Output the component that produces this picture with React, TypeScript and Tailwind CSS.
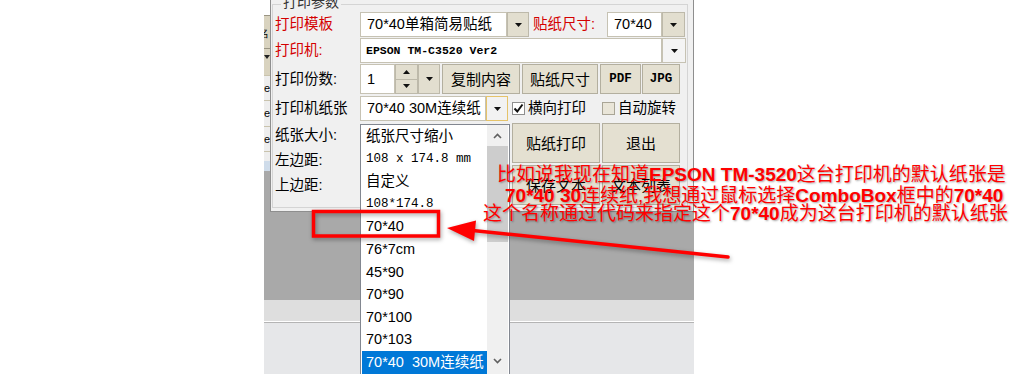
import React from "react";

function Tri({ up = false }: { up?: boolean }) {
  return (
    <svg width="7" height="4" viewBox="0 0 7 4">
      {up ? <path d="M0 4h7L3.5 0z" fill="#111" /> : <path d="M0 0h7L3.5 4z" fill="#111" />}
    </svg>
  );
}

function DropBtn({ className }: { className: string }) {
  return (
    <div className={"h-full flex items-center justify-center bg-[#e2decf] border border-[#bdb9aa] " + className}>
      <Tri />
    </div>
  );
}

function LeftStrip() {
  return (
    <div className="w-[6px] h-[212px] flex flex-col overflow-hidden text-[11px] leading-none">
      <div className="h-[15px] bg-white" />
      <div className="h-[33px] bg-[#d9d3bf] border-t border-[#9a9583] flex items-center overflow-hidden">
        <span className="-ml-[6px]">名</span>
      </div>
      <div className="h-[27px] bg-[#d9d3bf] border-t border-[#9a9583] flex items-start pt-[6px]">
        <svg width="6" height="4" viewBox="0 0 6 4"><path d="M0 0h6L3 4z" fill="#222" /></svg>
      </div>
      <div className="h-[25px] bg-[#eeeeee] border-t border-[#c9c3ad] flex items-center"><span className="font-['Liberation_Sans']">e</span></div>
      <div className="h-[26px] bg-[#eeeeee] border-t border-[#c9c3ad] flex items-center"><span className="font-['Liberation_Sans']">e</span></div>
      <div className="h-[25px] bg-[#eeeeee] border-t border-[#c9c3ad] flex items-center"><span className="font-['Liberation_Sans']">e</span></div>
      <div className="h-[10px] bg-[#eeeeee] border-t border-[#c9c3ad]" />
      <div className="h-[10px] bg-[#cfdcea]" />
      <div className="flex-1 bg-[#a9a9a9]" />
    </div>
  );
}

function Btn({ className, children }: { className: string; children: React.ReactNode }) {
  return (
    <div className={"h-full flex items-center justify-center bg-[#e4e0d1] border border-[#b3af9f] " + className}>
      {children}
    </div>
  );
}

function Dialog() {
  return (
    <div className="w-[424px] h-[212px] bg-[#f0f0f0] border-l border-r border-b border-[#8e8e8e] pl-px pr-[5px] pt-[4px] pb-[3px] text-[14.5px] leading-none font-['Liberation_Sans','Noto_Sans_CJK_SC',sans-serif]">
      <div className="relative h-[204px] border border-[#d4d4d4] pt-[7px] pl-[2px]">
        <div className="absolute left-[8px] -top-[10px] px-[2px] bg-[#f0f0f0] text-[#333] text-[14px] leading-[14px]">打印参数</div>

        {/* row 1 */}
        <div className="flex items-center h-[25px]">
          <div className="w-[85px] text-[#d40000]">打印模板</div>
          <div className="h-full w-[147px] bg-white border border-[#c6c2b3] flex items-center pl-[6px]">70*40单箱简易贴纸</div>
          <DropBtn className="w-[22px]" />
          <div className="ml-[4px] w-[74px] text-[#d40000]">贴纸尺寸:</div>
          <div className="h-full w-[55px] bg-white border border-[#c6c2b3] flex items-center pl-[6px]">70*40</div>
          <DropBtn className="w-[23px]" />
        </div>

        {/* row 2 */}
        <div className="flex items-center h-[25px] mt-px">
          <div className="w-[85px] text-[#d40000]">打印机:</div>
          <div className="h-full w-[302px] bg-white border border-[#c6c2b3] flex items-center pl-[5px] font-['Liberation_Mono',monospace] text-[11.5px] font-bold">EPSON TM-C3520 Ver2</div>
          <div className="h-full w-[24px] flex items-center justify-center bg-[#f4f4f4] border border-[#c6c2b3]"><Tri /></div>
        </div>

        {/* row 3 */}
        <div className="flex items-center h-[30px] mt-px">
          <div className="w-[85px]">打印份数:</div>
          <div className="h-full w-[35px] bg-white border border-[#c6c2b3] flex items-center pl-[6px]">1</div>
          <div className="h-full w-[23px] flex flex-col bg-[#e2decf] border border-[#bdb9aa]">
            <div className="flex-1 flex items-center justify-center border-b border-[#bdb9aa]"><Tri up /></div>
            <div className="flex-1 flex items-center justify-center"><Tri /></div>
          </div>
          <DropBtn className="w-[22px]" />
          <Btn className="ml-[2px] w-[78px] text-[15px]">复制内容</Btn>
          <Btn className="ml-[2px] w-[76px] text-[15px]">贴纸尺寸</Btn>
          <Btn className="ml-[2px] w-[41px] font-['Liberation_Mono',monospace] font-bold text-[12.5px]">PDF</Btn>
          <Btn className="ml-px w-[38px] font-['Liberation_Mono',monospace] font-bold text-[12.5px]">JPG</Btn>
        </div>

        {/* row 4 */}
        <div className="flex items-center h-[25px] mt-[2px]">
          <div className="w-[85px]">打印机纸张</div>
          <div className="h-full w-[126px] bg-white border border-[#c6c2b3] flex items-center pl-[6px] whitespace-nowrap">70*40 30M连续纸</div>
          <div className="h-full w-[22px] flex items-center justify-center bg-[#f2f2f2] border border-[#e5c36a]"><Tri /></div>
          <div className="ml-[4px] w-[13px] h-[13px] bg-white border border-[#8f8f8f] flex items-center justify-center">
            <svg width="11" height="11" viewBox="0 0 11 11"><path d="M1.5 5.5l2.8 3 5.2-7" stroke="#111" strokeWidth="2" fill="none" /></svg>
          </div>
          <div className="ml-[3px] w-[63px]">横向打印</div>
          <div className="ml-[11px] w-[13px] h-[13px] bg-[#e9e5d8] border border-[#a9a596]" />
          <div className="ml-[3px]">自动旋转</div>
        </div>

        {/* lower */}
        <div className="flex mt-[2px]">
          <div className="w-[85px] flex flex-col">
            <div className="h-[25px] flex items-center">纸张大小:</div>
            <div className="h-[25px] flex items-center">左边距:</div>
            <div className="h-[25px] flex items-center">上边距:</div>
          </div>
          <div className="w-[152px]" />
          <div className="grid grid-cols-[88px_78px] grid-rows-[40px_40px] gap-[2px] text-[15px]">
            <Btn className="">贴纸打印</Btn>
            <Btn className="">退出</Btn>
            <Btn className="">保存文本</Btn>
            <Btn className="">文本列表</Btn>
          </div>
        </div>
      </div>
    </div>
  );
}

const items: { t: string; mono?: boolean }[] = [
  { t: "纸张尺寸缩小" },
  { t: "108 x 174.8 mm", mono: true },
  { t: "自定义" },
  { t: "108*174.8", mono: true },
  { t: "70*40" },
  { t: "76*7cm" },
  { t: "45*90" },
  { t: "70*90" },
  { t: "70*100" },
  { t: "70*103" },
];

function DropList() {
  return (
    <div className="absolute left-[360px] top-[124px] w-[150px] h-[260px] bg-white border border-[#828790] flex text-[14.5px] leading-none font-['Liberation_Sans','Noto_Sans_CJK_SC',sans-serif]">
      <div className="w-[126px] flex flex-col">
        {items.map((it) => (
          <div
            key={it.t}
            className={
              "h-[22.6px] flex items-center pl-[5px] whitespace-nowrap " +
              (it.mono ? "font-['Liberation_Mono',monospace] text-[12.5px]" : "")
            }
          >
            {it.t}
          </div>
        ))}
        <div className="h-[22.6px] ml-px flex items-center pl-[4px] bg-[#0078d7] text-white whitespace-nowrap">70*40&nbsp;&nbsp;30M连续纸</div>
      </div>
      <div className="w-[21px] bg-[#f0f0f0] flex flex-col">
        <div className="h-[21px] flex items-center justify-center">
          <svg width="9" height="6" viewBox="0 0 9 6"><path d="M1 5l3.5-3.5L8 5" stroke="#606060" strokeWidth="1.6" fill="none" /></svg>
        </div>
        <div className="h-[96px] bg-[#cdcdcd]" />
        <div className="h-[108px]" />
        <div className="h-[22px] flex items-center justify-center">
          <svg width="9" height="6" viewBox="0 0 9 6"><path d="M1 1l3.5 3.5L8 1" stroke="#606060" strokeWidth="1.6" fill="none" /></svg>
        </div>
      </div>
    </div>
  );
}

function Annotation() {
  const base =
    "absolute whitespace-nowrap text-[19px] leading-[20px] text-[#ff0000] font-['Liberation_Sans','Noto_Sans_CJK_SC',sans-serif] [text-shadow:1px_1px_2px_rgba(0,0,0,0.35)]";
  return (
    <>
      <div className={base + " left-[497px] top-[165px]"}>
        比如说我现在知道<b>EPSON TM-3520</b>这台打印机的默认纸张是
      </div>
      <div className={base + " left-[505px] top-[186px]"}>
        <b>70*40 30</b>连续纸,我想通过鼠标选择<b>ComboBox</b>框中的<b>70*40</b>
      </div>
      <div className={base + " left-[483px] top-[204px]"}>
        这个名称通过代码来指定这个<b>70*40</b>成为这台打印机的默认纸张
      </div>
    </>
  );
}

function Marks() {
  return (
    <svg
      className="absolute left-0 top-0 [filter:drop-shadow(1px_2px_2px_rgba(0,0,0,0.35))]"
      width="1029"
      height="374"
      viewBox="0 0 1029 374"
    >
      <rect x="313.5" y="211.5" width="125" height="24.5" fill="none" stroke="#ff0000" strokeWidth="3.5" />
      <line x1="728" y1="257" x2="468" y2="230" stroke="#ff0000" strokeWidth="3.5" strokeLinecap="round" />
      <path d="M447 228 L476 220.5 L474 241 Z" fill="#ff0000" />
    </svg>
  );
}

export default function App() {
  return (
    <div className="relative w-[1029px] h-[374px] bg-white overflow-hidden text-black">
      <div className="ml-[264px] w-[430px] h-[374px] flex flex-col">
        <div className="flex h-[212px]">
          <LeftStrip />
          <Dialog />
        </div>
        <div className="h-[88px] bg-[#a9a9a9]" />
        <div className="h-[21px] bg-[#dedede]" />
        <div className="h-px bg-white" />
        <div className="h-px bg-[#b4b4b4]" />
        <div className="flex-1 bg-[#e6e7e9]" />
      </div>
      <DropList />
      <Annotation />
      <Marks />
    </div>
  );
}
